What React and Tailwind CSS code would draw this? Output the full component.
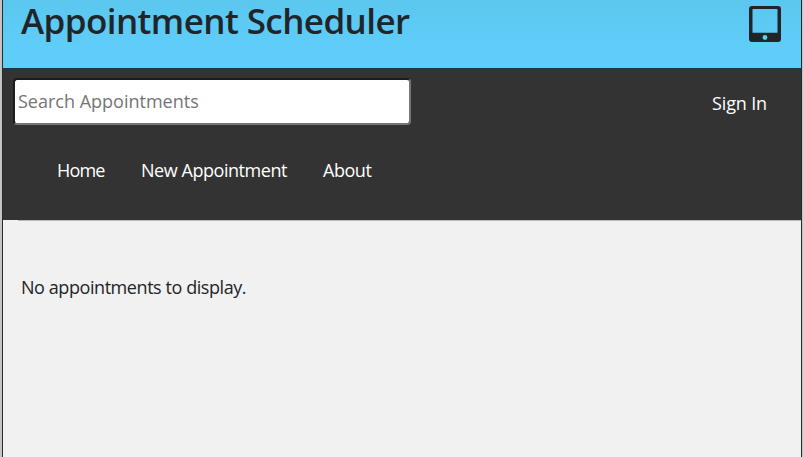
const UI = "font-['Open_Sans','Noto_Sans',sans-serif]";

function TabletIcon() {
  return (
    <svg width="32" height="36" viewBox="0 0 32 36" className="block">
      <path
        fillRule="evenodd"
        fill="#212529"
        d="M3 0H29Q32 0 32 3V33Q32 36 29 36H3Q0 36 0 33V3Q0 0 3 0ZM4.2 3Q3.5 3 3.5 3.8V26.8H28.5V3.8Q28.5 3 27.8 3ZM16 29.1A2.4 2.4 0 1 0 16 33.9A2.4 2.4 0 1 0 16 29.1Z"
      />
    </svg>
  );
}

export default function App() {
  return (
    <div className={`h-[457px] w-[803px] bg-[#c4c4c4] pl-[2px] pr-px ${UI}`}>
      <div className="flex h-full flex-col border-x border-[#2a2a2a] bg-[#f1f1f1]">
        <header className="flex h-[68px] items-start justify-between bg-linear-to-b from-[#5bc7ef] to-[#5ecdf8] to-70% pl-[18px] pr-5">
          <h1 className="whitespace-nowrap text-[35px] font-semibold leading-[42px] tracking-[-0.58px] text-[#212529]">
            Appointment Scheduler
          </h1>
          <div className="pt-[6px]">
            <TabletIcon />
          </div>
        </header>
        <div className="flex h-[152px] flex-col border-t border-[#1d3640] bg-[#333333]">
          <div className="flex items-start justify-between pl-[10px] pr-[34px] pt-[9px]">
            <input
              type="text"
              placeholder="Search Appointments"
              className="h-[47px] w-[398px] rounded-[4px] border-2 border-b-[#767676] border-l-[#1c1c1c] border-r-[#767676] border-t-[#1c1c1c] bg-white px-[3px] pb-[2px] text-[18px] placeholder:text-[#757575] outline-none"
            />
            <a className="pt-[11px] text-[18px] leading-[28px] tracking-[-0.15px] text-white">Sign In</a>
          </div>
          <nav className="flex pl-[54px] pt-[31px] text-[18px] leading-[28px] tracking-[-0.45px] text-white">
            <a className="w-[84px] tracking-[-0.8px]">Home</a>
            <a className="w-[182px]">New Appointment</a>
            <a>About</a>
          </nav>
        </div>
        <main className="flex-1 pl-[1px]">
          <div className="ml-[14px] h-px bg-[#bdb9bb]" />
          <p className="pl-[17px] pt-[52px] text-[18px] leading-[28px] tracking-[-0.43px] text-[#212529]">
            No appointments to display.
          </p>
        </main>
      </div>
    </div>
  );
}
